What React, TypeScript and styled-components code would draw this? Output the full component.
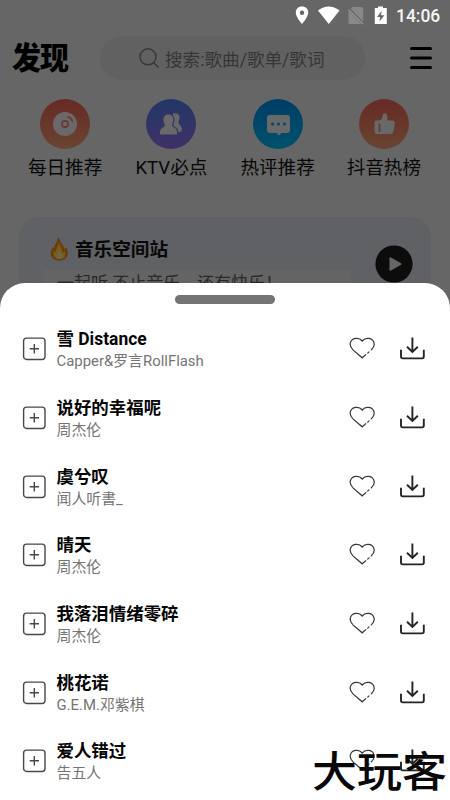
import React from "react";
import styled, { createGlobalStyle } from "styled-components";

const GlobalStyle = createGlobalStyle`
  * { box-sizing: border-box; }
  body {
    margin: 0;
    font-family: Roboto, "Noto Sans CJK SC", sans-serif;
    color: #080808;
  }
`;

const Screen = styled.main`
  position: relative;
  width: 450px;
  height: 800px;
  overflow: hidden;
  background: #666;
`;

const StatusBar = styled.div`
  height: 32px;
  padding: 0 10px 0 0;
  display: flex;
  justify-content: flex-end;
  align-items: center;
`;

const StatusIcons = styled.svg`
  width: 94px;
  height: 20px;
  margin-right: 7px;
  margin-top: -1px;
  flex: none;
`;

const Clock = styled.span`
  width: 44px;
  font-size: 18px;
  font-weight: 500;
  line-height: 20px;
  color: #f4f4f4;
  white-space: nowrap;
  transform: scaleX(0.97);
  transform-origin: left;
`;

const Header = styled.header`
  height: 52px;
  padding: 0 17px 0 12px;
  display: flex;
  align-items: center;
`;

const Brand = styled.h1`
  margin: 0;
  width: 88px;
  font-size: 29px;
  font-weight: 900;
  line-height: 44px;
  letter-spacing: -1px;
  color: #000;
  transform: scaleY(1.05);
`;

const SearchBox = styled.div`
  width: 265px;
  height: 44px;
  border-radius: 22px;
  background: #616161;
  color: #363636;
  display: flex;
  align-items: center;
  padding-left: 38px;
  font-size: 17.6px;
  white-space: nowrap;

  svg { width: 22px; height: 22px; margin-right: 5px; flex: none; }
`;

const MenuIcon = styled.svg`
  width: 24px;
  height: 26px;
  margin-left: auto;
`;

const Shortcuts = styled.nav`
  padding: 15px 13px 0 12px;
  display: grid;
  grid-template-columns: repeat(4, 1fr);
`;

const Shortcut = styled.div`
  display: flex;
  flex-direction: column;
  align-items: center;
  font-size: 18.6px;
  line-height: 24px;
  white-space: nowrap;
`;

const Disc = styled.div<{ $from: string; $to: string }>`
  width: 50px;
  height: 50px;
  margin-bottom: 7px;
  border-radius: 50%;
  background: linear-gradient(${(p) => p.$from}, ${(p) => p.$to});
  svg { display: block; }
`;

const StationCard = styled.section`
  height: 150px;
  margin: 37px 19px 0;
  padding: 19px 18px 0 25px;
  border-radius: 20px;
  background: #5f6164;
  display: flex;
  justify-content: space-between;
`;

const StationText = styled.div`
  width: 307px;
`;

const StationTitle = styled.h2`
  margin: 0;
  height: 34px;
  padding: 0 0 7px 5px;
  display: flex;
  align-items: center;
  gap: 5px;
  font-size: 18.6px;
  font-weight: 700;
  line-height: 24px;
  svg { width: 21px; height: 25px; flex: none; }
`;

const StationNote = styled.p`
  margin: 0;
  height: 50px;
  padding: 1px 0 0 13px;
  background: #646465;
  color: #292929;
  font-size: 17px;
  line-height: 24px;
  white-space: pre;
`;

const PlayButton = styled.svg`
  width: 38px;
  height: 38px;
  margin-top: 9px;
`;

const Sheet = styled.section`
  position: absolute;
  inset: 283px 0 0;
  padding: 12px 25px 0 22px;
  border-radius: 25px 25px 0 0;
  background: #fff;
`;

const Handle = styled.div`
  width: 100px;
  height: 9px;
  margin: 0 auto 11px 153px;
  border-radius: 5px;
  background: #747474;
`;

const SongRow = styled.div`
  height: 68.7px;
  display: flex;
  align-items: center;
`;

const SongText = styled.div`
  width: 303px;
  padding-left: 10.5px;
  white-space: nowrap;
`;

const SongTitle = styled.div`
  font-size: 17.45px;
  font-weight: 700;
  line-height: 24px;
  color: #050505;
`;

const Artist = styled.div`
  font-size: 14.9px;
  line-height: 20px;
  color: #757575;
`;

const PlusIcon = styled.svg`
  width: 24px;
  height: 24px;
  flex: none;
`;

const HeartIcon = styled.svg`
  width: 28px;
  height: 26px;
  flex: none;
`;

const DownloadIcon = styled.svg`
  width: 28px;
  height: 26px;
  margin-left: auto;
  flex: none;
`;

const Watermark = styled.div`
  position: absolute;
  left: 312px;
  top: 743px;
  font-size: 45px;
  font-weight: 500;
  line-height: 60px;
  color: #080808;
  white-space: nowrap;
  transform: scaleY(0.94);
`;

const shortcuts = [
  {
    label: "每日推荐", from: "#682924", to: "#694532",
    icon: (
      <>
        <circle cx="25" cy="25" r="12" fill="#696969" />
        <circle cx="25" cy="25" r="3.1" fill="none" stroke="#693830" strokeWidth="1.6" />
        <path d="M27.8 17.8Q31.5 19 32.4 22.4" fill="none" stroke="#693830" strokeWidth="1.7" strokeLinecap="round" />
      </>
    ),
  },
  {
    label: "KTV必点", from: "#213766", to: "#403168",
    icon: (
      <g fill="#696969">
        <path d="M27 14.7C33 12.5 35 18 32.5 22.5C31.5 25 36.5 27 36 30.5Q35.5 33 33.5 33H27Z" />
        <path d="M16.8 21C16.8 12.8 28 12.8 28 21C28 24.5 25.2 26.2 27.5 27.5C31 29 32.5 31.5 31.5 36H13.5C12.5 31.5 14 29 17.5 27.5C19.7 26.2 16.8 24.5 16.8 21Z" stroke="#333467" strokeWidth="1.2" />
      </g>
    ),
  },
  {
    label: "热评推荐", from: "#003d66", to: "#00526c",
    icon: (
      <>
        <path d="M17 16H34Q37 16 37 19V31Q37 34 34 34H28.5L26 36.5L23.5 34H17Q14 34 14 31V19Q14 16 17 16Z" fill="#696969" />
        <g fill="#004869"><circle cx="19.5" cy="25" r="1.5" /><circle cx="25.5" cy="25" r="1.5" /><circle cx="31.5" cy="25" r="1.5" /></g>
      </>
    ),
  },
  {
    label: "抖音热榜", from: "#682924", to: "#694532",
    icon: (
      <>
        <path d="M17.5 21.5H21Q23.5 20 23.7 16.5C24 13.5 28.3 13.5 28.3 17.3V21.5H33Q36 21.5 35.8 24.5L34.6 32Q34 35 31 35H17.5Q15.5 35 15.5 33V23.5Q15.5 21.5 17.5 21.5Z" fill="#696969" />
        <path d="M20.5 24.5V33" stroke="#693830" strokeWidth="1.7" />
      </>
    ),
  },
];

const songs = [
  ["雪 Distance", "Capper&罗言RollFlash"],
  ["说好的幸福呢", "周杰伦"],
  ["虞兮叹", "闻人听書_"],
  ["晴天", "周杰伦"],
  ["我落泪情绪零碎", "周杰伦"],
  ["桃花诺", "G.E.M.邓紫棋"],
  ["爱人错过", "告五人"],
];

function Song({ title, artist }: { title: string; artist: string }) {
  return (
    <SongRow>
      <PlusIcon viewBox="0 0 24 24" fill="none" stroke="#484848">
        <rect x="1.6" y="1.1" width="21.4" height="21.4" rx="3" strokeWidth="1.4" />
        <path d="M7.7 11.8H17M12.3 7.1V16.5" strokeWidth="1.4" />
      </PlusIcon>
      <SongText>
        <SongTitle>{title}</SongTitle>
        <Artist>{artist}</Artist>
      </SongText>
      <HeartIcon viewBox="0 0 28 26" fill="none" stroke="#383838" strokeWidth="1.25" strokeLinecap="round">
        <path d="M22.3 13.9C24.8 11.4 25.7 9.5 25.1 7.2C23.8 1.5 16.4.9 13.2 5C10 .9 2.6 1.5 1.3 7.2C.7 9.8 1.9 11.8 4.2 14.1L13.2 21.8L16.8 18.6" />
        <path d="M18.7 17.1L20 15.9" />
      </HeartIcon>
      <DownloadIcon viewBox="0 0 28 26" fill="none" stroke="#242424" strokeWidth="1.9">
        <path d="M15.4 1.5V15.7M10 10.8L15.4 16L20.8 10.8" />
        <path d="M4 13.8V20.6Q4 22.4 5.8 22.4H25Q26.8 22.4 26.8 20.6V13.8" />
      </DownloadIcon>
    </SongRow>
  );
}

export default function App() {
  return (
    <Screen>
      <GlobalStyle />
      <StatusBar>
        <StatusIcons viewBox="0 0 94 20">
          <path d="M7 .5C3 .5.8 3.2.8 6.8C.8 11 7 18 7 18S13.2 11 13.2 6.8C13.2 3.2 11 .5 7 .5Z" fill="#fff" />
          <circle cx="7" cy="6.8" r="2.2" fill="#666" />
          <path d="M23 4.5Q33.8-3.5 44.5 4.5L33.8 18Z" fill="#fff" />
          <path d="M57.5 1H66Q68.2 1 68.2 3.2V18H53.5V5Z" fill="#888" />
          <path d="M52.8 1.8L68.5 18.2" stroke="#666" strokeWidth="3" />
          <path d="M53.5 3.5L68.2 18.2" stroke="#929292" strokeWidth="1.3" />
          <path d="M83 .5H88V2H91.8V18H79.8V2H83Z" fill="#fff" />
          <path d="M86.8 4.8L82 11H85.2L84.4 15.6L89.5 9.2H86Z" fill="#666" />
        </StatusIcons>
        <Clock>14:06</Clock>
      </StatusBar>
      <Header>
        <Brand>发现</Brand>
        <SearchBox>
          <svg viewBox="0 0 22 22" fill="none" stroke="#363636" strokeWidth="1.4">
            <circle cx="10" cy="9.8" r="8" />
            <path d="M15.7 15.7L20.6 20.6" />
          </svg>
          搜索:歌曲/歌单/歌词
        </SearchBox>
        <MenuIcon viewBox="0 0 24 26" stroke="#000" strokeWidth="3" strokeLinecap="round">
          <path d="M2.5 3.5H21.5M2.5 13H21.5M2.5 22.5H21.5" />
        </MenuIcon>
      </Header>
      <Shortcuts>
        {shortcuts.map((s) => (
          <Shortcut key={s.label}>
            <Disc $from={s.from} $to={s.to}>
              <svg width="50" height="50" viewBox="0 0 50 50">{s.icon}</svg>
            </Disc>
            {s.label}
          </Shortcut>
        ))}
      </Shortcuts>
      <StationCard>
        <StationText>
          <StationTitle>
            <svg viewBox="0 0 21 26">
              <path d="M9.5 1C10.5 7 15.5 9 14.5 14L17 11.5C20 16 19 24 10.5 24C2 24 0 17 4 11L5.8 13C5 8 9 6 9.5 1Z" fill="#704008" stroke="#6a3010" strokeWidth="1" />
              <path d="M10 6C11 11 14 13 13 17L16 15C17.5 21 14.5 23 10.5 23C5 23 3 18 5 14L7 16C6.5 12 9 10 10 6Z" fill="#746010" />
              <path d="M10 14C12 17 14 18 13.5 21C12 23.5 8.5 23 7.5 21C7 19 9 17 10 14Z" fill="#686556" />
            </svg>
            音乐空间站
          </StationTitle>
          <StationNote>一起听 不止音乐，还有快乐！</StationNote>
        </StationText>
        <PlayButton viewBox="0 0 38 38">
          <circle cx="19" cy="19" r="18.6" fill="#0c0c0d" />
          <path d="M15.2 13V25L25.8 19Z" fill="#656565" stroke="#656565" strokeWidth="1.5" strokeLinejoin="round" />
        </PlayButton>
      </StationCard>
      <Sheet>
        <Handle />
        {songs.map(([title, artist]) => (
          <Song key={title} title={title} artist={artist} />
        ))}
      </Sheet>
      <Watermark>大玩客</Watermark>
    </Screen>
  );
}
